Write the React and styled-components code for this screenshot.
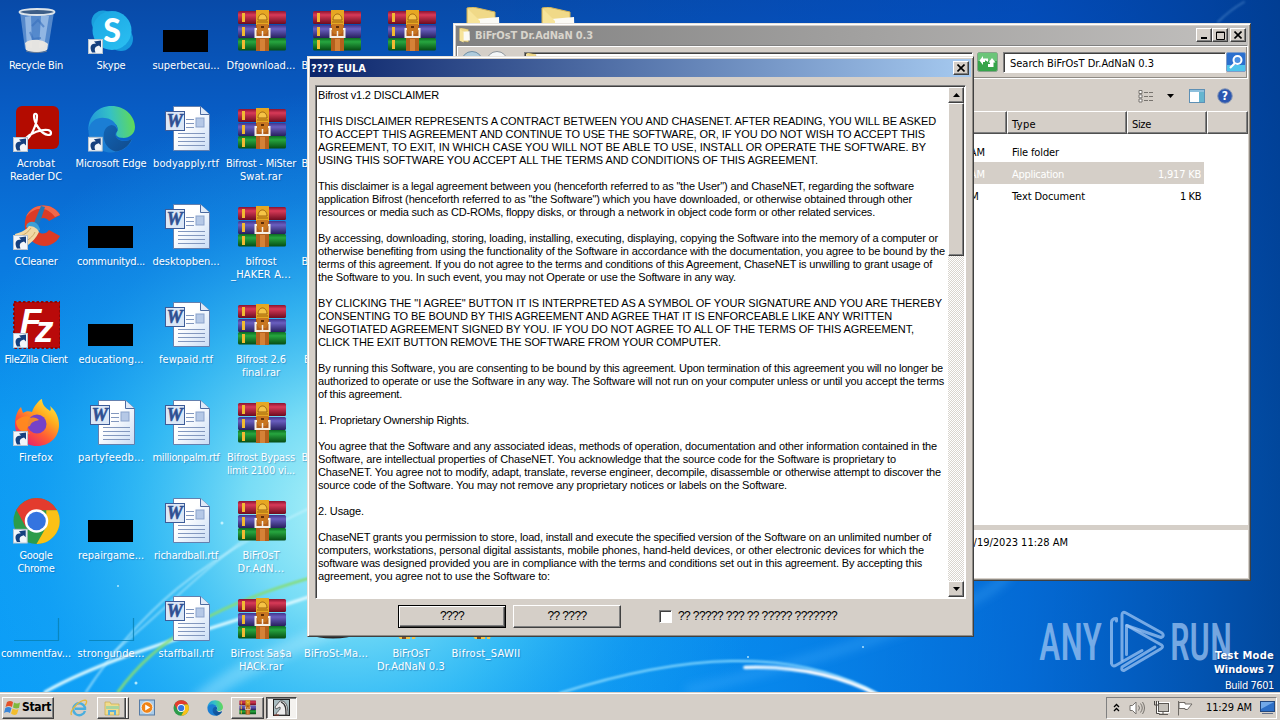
import { useLayoutEffect, useRef, useState } from "react";
import styled, { createGlobalStyle, css } from "styled-components";

const GlobalStyle = createGlobalStyle`
    html, body {
        margin: 0;
        padding: 0;
        overflow: hidden;
    }
    * {
        box-sizing: border-box;
    }
    svg {
        display: block;
        flex: none;
    }
`;

const face = "#d5cfc8";

const tahoma = css`
    font-family: "DejaVu Sans Condensed", "DejaVu Sans", sans-serif;
    font-stretch: condensed;
    font-size: 11px;
    line-height: 13px;
`;

const raised = css`
    background-color: ${face};
    border: 1px solid;
    border-color: #fff #404040 #404040 #fff;
    box-shadow: inset -1px -1px 0 #808080;
`;

const sunken = css`
    border: 1px solid;
    border-color: #808080 #fff #fff #808080;
    box-shadow: inset 1px 1px 0 #404040;
`;

/* text */

const FitText = styled.span`
    display: inline-block;
    white-space: pre;
`;

// spreads the letters so that a line takes the width of the bitmap font
const Fit = ({ text, width }) => {
    const ref = useRef(null);
    const [spacing, setSpacing] = useState(0);
    useLayoutEffect(() => {
        const natural = ref.current.getBoundingClientRect().width;
        setSpacing((width - natural) / text.length);
    }, [text, width]);
    return <FitText ref={ref} style={{ letterSpacing: `${spacing}px` }}>{text}</FitText>;
};

/* desktop */

const Desktop = styled.div`
    position: relative;
    width: 1280px;
    height: 720px;
    overflow: hidden;
    background: #0878dc;
    ${tahoma}
`;

const Wallpaper = styled.svg`
    position: absolute;
    top: 0;
    left: 0;
`;

const IconGrid = styled.div`
    position: relative;
    display: grid;
    grid-template-columns: repeat(8, 72px);
    grid-template-rows: repeat(7, 98px);
    grid-auto-flow: column;
    column-gap: 3px;
`;

const Shortcut = styled.div`
    display: flex;
    flex-direction: column;
    align-items: center;
    padding-top: 7px;
`;

const ShortcutLabel = styled.div`
    display: flex;
    flex-direction: column;
    align-items: center;
    padding-top: 4px;
    color: #fff;
    text-shadow: 1px 1px 1px rgba(0, 60, 130, 0.35);
`;

const Watermark = styled.svg`
    position: absolute;
    left: 1036px;
    top: 606px;
`;

const BuildInfo = styled.div`
    position: absolute;
    right: 6px;
    top: 649px;
    display: flex;
    flex-direction: column;
    align-items: flex-end;
    color: #fff;
    text-shadow: 1px 1px 1px rgba(0, 20, 80, 0.5);
    line-height: 14px;
`;

const BuildLine = styled.div`
    font-weight: ${props => props.$bold ? 700 : 400};
    margin-top: ${props => props.$bold ? 0 : 2}px;
`;

/* windows */

const Window = styled.div`
    position: absolute;
    display: flex;
    flex-direction: column;
    left: ${props => props.$x}px;
    top: ${props => props.$y}px;
    width: ${props => props.$w}px;
    height: ${props => props.$h}px;
    padding: 2px;
    background-color: ${face};
    border: 1px solid;
    border-color: #e8e4de #404040 #404040 #e8e4de;
    box-shadow: inset 1px 1px 0 #fff, inset -1px -1px 0 #908c86;
`;

const TitleBar = styled.div`
    display: flex;
    align-items: center;
    flex: none;
    height: ${props => props.$active ? 18 : 19}px;
    padding: 0 2px ${props => props.$active ? 0 : 1}px ${props => props.$active ? 1 : 2}px;
    color: ${props => props.$active ? "#fff" : "#d8d4cc"};
    font-weight: 700;
    background: ${props => props.$active
        ? "linear-gradient(90deg, #0a246a, #a6caf0)"
        : "linear-gradient(90deg, #808080, #c2c0be)"};
`;

const Title = styled.div`
    flex: 1;
    padding-left: ${props => props.$indent || 0}px;
`;

const CaptionButton = styled.button`
    ${raised}
    display: flex;
    align-items: center;
    justify-content: center;
    width: 16px;
    height: 14px;
    padding: 0;
    margin-left: ${props => props.$gap || 0}px;
`;

/* explorer */

const Rebar = styled.div`
    display: flex;
    align-items: center;
    justify-content: flex-end;
    flex: none;
    height: 34px;
    padding-right: 1px;
    border: 1px solid;
    border-color: #808080 #fff #fff #808080;
    box-shadow: inset 1px 1px 0 #fff, inset -1px -1px 0 #8e8a84;
`;

const NavButtons = styled.div`
    display: flex;
    gap: 3px;
    flex: none;
    padding-left: 4px;
`;

const AddressBox = styled.div`
    flex: 1;
    height: 21px;
    margin: 0 4px 0 16px;
    background: #fff;
    ${sunken}
`;

const SearchBox = styled.div`
    display: flex;
    align-items: center;
    width: 223px;
    height: 21px;
    margin-left: 5px;
    padding: 2px 0 0 6px;
    color: #000;
    background: #fff;
    ${sunken}
`;

const Toolbar = styled.div`
    display: flex;
    align-items: center;
    justify-content: flex-end;
    flex: none;
    height: 32px;
    padding: 2px 15px 0 0;
`;

const ToolIcon = styled.div`
    margin-left: ${props => props.$gap}px;
`;

const FileTable = styled.div`
    display: flex;
    flex-direction: column;
    flex: 1;
    background: #fff;
`;

const HeaderRow = styled.div`
    display: grid;
    grid-template-columns: 1fr 120px 80px 41px;
    flex: none;
    height: 23px;
    margin-bottom: 6px;
`;

const HeaderCell = styled.div`
    ${raised}
    border-color: #fff #505050 #505050 #fff;
    padding: 6px 0 0 4px;
`;

const FileRow = styled.div`
    display: grid;
    grid-template-columns: 1fr 136px 80px;
    align-items: center;
    flex: none;
    height: 22px;
    width: 748px;
    padding: 2px 3px 0 0;
    color: ${props => props.$selected ? "#fff" : "#000"};
    background: ${props => props.$selected ? "#d5cfc8" : "transparent"};
`;

const DateCell = styled.div`
    text-align: right;
    padding-right: ${props => props.$inset}px;
`;

const TypeCell = styled.div`
    padding-left: 27px;
`;

const SizeCell = styled.div`
    text-align: right;
`;

const Splitter = styled.div`
    flex: none;
    height: 5px;
    background: ${face};
`;

const DetailsPane = styled.div`
    flex: none;
    display: flex;
    justify-content: flex-end;
    height: 48px;
    padding: 6px 180px 0 0;
    background: #fff;
`;

/* agreement dialog */

const TextArea = styled.div`
    display: flex;
    flex: none;
    height: 514px;
    margin: 8px 5px 0 5px;
    padding: 1px;
    background: #fff;
    ${sunken}
`;

const TextLines = styled.div`
    flex: 1;
    padding: 2px 0 0 1px;
    overflow: hidden;
    color: #000;
    font-family: "Liberation Sans", Arial, sans-serif;
    font-size: 11px;
    line-height: 13px;
`;

const TextLine = styled.div`
    height: 13px;
    white-space: nowrap;
`;

const ScrollBar = styled.div`
    display: flex;
    flex-direction: column;
    justify-content: space-between;
    width: 16px;
    background: repeating-conic-gradient(#fff 0 25%, #d9d5ce 0 50%) 0 0 / 2px 2px;
`;

const ScrollButton = styled.button`
    ${raised}
    display: flex;
    align-items: center;
    justify-content: center;
    width: 16px;
    height: 16px;
    padding: 0;
`;

const ScrollThumb = styled.div`
    ${raised}
    height: 153px;
`;

const Footer = styled.div`
    display: flex;
    align-items: center;
    flex: 1;
    padding: 0 0 1px 88px;
    color: #000;
    font-family: "Liberation Sans", Arial, sans-serif;
    font-size: 12px;
`;

const PushButton = styled.button`
    ${raised}
    width: 108px;
    height: 23px;
    margin-right: 7px;
    padding: 0;
    color: #000;
    font: inherit;
    ${props => props.$default && css`
        border-color: #000;
        box-shadow: inset 1px 1px 0 #fff, inset -1px -1px 0 #404040, inset -2px -2px 0 #808080;
    `}
`;

const CheckBox = styled.div`
    width: 13px;
    height: 13px;
    margin: 0 6px 0 31px;
    background: #fff;
    ${sunken}
`;

/* taskbar */

const Taskbar = styled.div`
    position: absolute;
    left: 0;
    right: 0;
    bottom: 0;
    height: 28px;
    display: flex;
    align-items: center;
    padding: 3px 3px 1px 2px;
    background: ${face};
    border-top: 1px solid ${face};
    box-shadow: inset 0 1px 0 #fff;
`;

const StartButton = styled.button`
    ${raised}
    display: flex;
    align-items: center;
    width: 52px;
    height: 22px;
    padding: 0 0 0 1px;
    gap: 1px;
    color: #000;
    font: inherit;
    font-weight: 700;
    font-size: 12px;
`;

const QuickItem = styled.div`
    display: flex;
    align-items: center;
    justify-content: center;
    width: ${props => props.$w || 34}px;
    height: 22px;
    padding-left: ${props => props.$inset || 1}px;
`;

const TaskButton = styled.div`
    ${raised}
    display: flex;
    align-items: center;
    justify-content: center;
    width: ${props => props.$w || 32}px;
    height: 22px;
    margin-right: ${props => props.$gap || 0}px;
    ${props => props.$stack && css`
        padding-right: 3px;
        box-shadow: inset -1px 0 0 ${face}, inset -2px 0 0 #fff, inset -3px 0 0 #404040, inset -4px 0 0 #808080, inset 0 -1px 0 #808080;
    `}
    ${props => props.$pressed && css`
        background: #f4f2ef;
        border-color: #404040 #fff #fff #404040;
        box-shadow: inset 1px 1px 0 #808080;
    `}
`;

const Tray = styled.div`
    display: flex;
    align-items: center;
    width: 171px;
    height: 22px;
    margin-left: auto;
    padding-left: 6px;
    border: 1px solid;
    border-color: #808080 #fff #fff #808080;
    color: #000;
`;

const Clock = styled.div`
    margin: 0 8px 0 12px;
`;

/* drawings */

const ShortcutBadge = () => (
    <g>
        <rect x="1.5" y="32.5" width="14" height="14" fill="#f2f6fa" stroke="#b8c4d0" />
        <path d="M5 45.500c-3-6-1-9 4-9L7 34.500l7-1v7l-2-2c-4 1-5 3-3.500 7z" fill="#15407e" />
    </g>
);

const RecycleBin = () => (
    <svg width="48" height="48" viewBox="0 0 48 48">
        <path d="M8 5l5 37c4 4 18 4 23 0l6-37z" fill="#7fa9dc" fillOpacity=".65" />
        <path d="M13 10l2 30 5 1-1-32zM29 9l-2 32 5-1 5-31z" fill="#c3dbf5" fillOpacity=".55" />
        <path d="M13 36c5-5 18-4 23 1l-1 6c-5 3-16 3-21 0z" fill="#ede9e2" fillOpacity=".95" />
        <path d="M20 19l6-6 6 7M18 25l3 7 8-1" fill="none" stroke="#386fbc" strokeWidth="2" opacity=".6" />
        <ellipse cx="25" cy="5" rx="17.5" ry="3" fill="#3d5e87" stroke="#dce4ea" strokeWidth="1.8" />
        <path d="M14 44c6 2 16 2 21 0" fill="none" stroke="#6b7c93" />
    </svg>
);

const Skype = () => (
    <svg width="48" height="48" viewBox="0 0 48 48">
        <defs>
            <linearGradient id="sky" x1="0" y1="0" x2=".7" y2="1">
                <stop offset="0" stopColor="#1aa5e2" />
                <stop offset="1" stopColor="#29bdf0" />
            </linearGradient>
        </defs>
        <circle cx="16" cy="15" r="11.5" fill="#1a9fdc" />
        <circle cx="34" cy="32" r="12" fill="#169ade" />
        <circle cx="25" cy="23.500" r="19.500" fill="url(#sky)" />
        <text x="25" y="34.500" textAnchor="middle" fontFamily="Lato, sans-serif" fontWeight="900" fontSize="32" fill="#fff">S</text>
        <ShortcutBadge />
    </svg>
);

const Acrobat = () => (
    <svg width="48" height="48" viewBox="0 0 48 48">
        <rect x="4" y="1" width="43" height="43" rx="6" fill="#b30b00" />
        <path d="M13 36C19 32 25 20 25 11C25 8 22 8 22 11C22 18 29 29 36 30C40 30 40 26 36 25C29 24 19 28 14 33C12 36 12 37 13 36Z" fill="none" stroke="#fff" strokeWidth="2.200" />
        <ShortcutBadge />
    </svg>
);

const EdgeArt = () => (
    <g>
        <defs>
            <linearGradient id="edgeTop" x1="0" y1=".6" x2="1" y2=".5">
                <stop offset="0" stopColor="#2096dc" />
                <stop offset=".5" stopColor="#35c1c5" />
                <stop offset="1" stopColor="#62da55" />
            </linearGradient>
            <linearGradient id="edgeLow" x1="0" y1="0" x2="1" y2="1">
                <stop offset="0" stopColor="#1264b4" />
                <stop offset="1" stopColor="#114a8b" />
            </linearGradient>
        </defs>
        <path d="M1.500 25C1 11 11 .5 25 .5S49 11 49 22c0 8-7 12-14 11-6-1-6-4-4-7 1-2 0-5-2-7z" fill="url(#edgeTop)" />
        <path d="M1.500 25C3 14 13 11 20 13c6 1 11 6 11 12-1 1-2 2-2 4 1 7 11 9 17 5 0 4-8 14-21 14C10 48 1 36 1.500 25z" fill="#1b7ed4" />
        <path d="M17 31c0-6 3-10 8-11 3 0 6 3 6 6-1 1-2 2-2 4 2 7 11 8 17 4-3 8-11 13-17 13-7-2-12-8-12-16z" fill="url(#edgeLow)" />
    </g>
);

const Edge = () => (
    <svg width="48" height="48" viewBox="0 0 49 48">
        <EdgeArt />
        <ShortcutBadge />
    </svg>
);

const CCleaner = () => (
    <svg width="48" height="48" viewBox="0 0 48 48">
        <path d="M48 12C41-1 20-1 14 14c-6 18 10 33 24 28 5-2 8-5 10-9l-11-6c-4 6-12 4-13-3-1-9 9-12 13-6z" fill="#dc3b25" />
        <path d="M48 12C41-1 20-1 14 14c8-10 20-12 29 0z" fill="#f1684a" />
        <path d="M29 3l4 1-6 18-5-2z" fill="#2277b6" />
        <path d="M15 21c5-5 12-1 13 6l-4 2-10-5z" fill="#3da0d6" />
        <path d="M3 31c7-2 11-4 14-8 5 0 9 3 10 6-3 6-7 10-11 13-8-1-13-5-13-11z" fill="#f1d8a4" />
        <path d="M8 33c5-1 9-5 11-8M14 38c4-2 8-6 9-9" stroke="#cba764" fill="none" />
        <ShortcutBadge />
    </svg>
);

const FileZilla = () => (
    <svg width="48" height="48" viewBox="0 0 48 48">
        <rect x="2" y="1" width="46" height="46" fill="#b90a0a" stroke="#8e0707" strokeWidth="2" strokeDasharray="2.500 2" />
        <text x="8" y="32" fontFamily="Liberation Sans, sans-serif" fontStyle="italic" fontWeight="700" fontSize="35" fill="#fff">F</text>
        <text x="23" y="41" fontFamily="Liberation Sans, sans-serif" fontStyle="italic" fontWeight="700" fontSize="37" fill="#fff">z</text>
        <ShortcutBadge />
    </svg>
);

const Firefox = () => (
    <svg width="48" height="48" viewBox="0 0 48 48">
        <defs>
            <linearGradient id="fox" x1=".9" y1="0" x2=".2" y2="1">
                <stop offset="0" stopColor="#fff04a" />
                <stop offset=".35" stopColor="#ffad1e" />
                <stop offset=".65" stopColor="#ff5a36" />
                <stop offset="1" stopColor="#e31a72" />
            </linearGradient>
        </defs>
        <path d="M3 25C3 18 5 12 9 8l2 6c3-2 6-2 9-1C22 7 27 1 30 0c0 6 4 9 8 12 1-1 1-3 0-5 6 5 9 12 9 19 0 12-9 21-22 21S3 37 3 25z" fill="url(#fox)" />
        <circle cx="25" cy="25" r="9.500" fill="#7542c8" />
        <path d="M4 22c5-5 12-6 15-3 3-1 6 0 8 2-4 1-8 2-9 6-3 0-4 4 0 8C9 34 4 29 4 22z" fill="#ff8d1d" fillOpacity=".9" />
        <ShortcutBadge />
    </svg>
);

const ChromeArt = () => (
    <g>
        <circle cx="25" cy="24" r="23.500" fill="#2c9c4b" />
        <path d="M25 .5A23.500 23.500 0 0 1 46 13H25L14 30 4.500 12.500A23.500 23.500 0 0 1 25 .5z" fill="#e33b2e" />
        <path d="M46 13a23.500 23.500 0 0 1-21 34.500L35 30V13z" fill="#fbc116" />
        <circle cx="25" cy="24" r="12" fill="#fff" />
        <circle cx="25" cy="24" r="9.500" fill="#3474e0" />
    </g>
);

const Chrome = () => (
    <svg width="48" height="48" viewBox="0 0 49 48">
        <ChromeArt />
        <ShortcutBadge />
    </svg>
);

const Thumbnail = ({ empty }) => (
    <svg width="48" height="48" viewBox="0 0 48 48">
        {empty
            ? <path d="M2 45.500h44.500V23" fill="none" stroke="#087fb2" strokeWidth="1.200" opacity=".8" />
            : <rect x="1" y="23" width="45" height="22" />}
    </svg>
);

const WordDoc = () => (
    <svg width="48" height="48" viewBox="0 0 48 48">
        <defs>
            <linearGradient id="page" x1="0" y1="0" x2="1" y2="1">
                <stop offset=".4" stopColor="#fff" />
                <stop offset="1" stopColor="#c9dcf5" />
            </linearGradient>
        </defs>
        <path d="M11.500 1.500h27l9 8v36h-36z" fill="url(#page)" stroke="#6480ae" />
        <path d="M38.500 1.500v8h9" fill="#dfe9f7" stroke="#4d6a9f" />
        <path d="M24 14.500h8M24 18.500h8M24 22.500h8M16 28.500h27M16 32.500h27M16 36.500h27M16 40.500h27" stroke="#8297be" />
        <rect x="34" y="13" width="8" height="9" fill="#b5c8e6" stroke="#8ba3cc" />
        <rect x="3.500" y="6.500" width="19" height="19" fill="#dce7f6" stroke="#3d5c98" />
        <text x="12.800" y="22" textAnchor="middle" fontFamily="Liberation Serif, serif" fontStyle="italic" fontWeight="700" fontSize="18" fill="#2f5092" stroke="#2f5092" strokeWidth=".6">W</text>
    </svg>
);

const RarArt = () => (
    <g>
        <defs>
            <linearGradient id="bookRed" x1="0" y1="0" x2="0" y2="1">
                <stop offset="0" stopColor="#8b1330" />
                <stop offset=".3" stopColor="#d83a58" />
                <stop offset="1" stopColor="#6d0c20" />
            </linearGradient>
            <linearGradient id="bookBlue" x1="0" y1="0" x2="0" y2="1">
                <stop offset="0" stopColor="#40348c" />
                <stop offset=".3" stopColor="#6a5fc0" />
                <stop offset="1" stopColor="#28205e" />
            </linearGradient>
            <linearGradient id="bookGreen" x1="0" y1="0" x2="0" y2="1">
                <stop offset="0" stopColor="#0c6b22" />
                <stop offset=".3" stopColor="#27a63f" />
                <stop offset="1" stopColor="#064c14" />
            </linearGradient>
        </defs>
        <rect x="1" y="4" width="48" height="13" rx="1.500" fill="url(#bookRed)" />
        <rect x="1" y="18" width="48" height="13" rx="1.500" fill="url(#bookBlue)" />
        <rect x="1" y="31" width="48" height="12.500" rx="1.500" fill="url(#bookGreen)" />
        <path d="M5 6h3v9H5zM5 20h3v9H5zM5 33h3v9H5z" fill="#f2ba32" />
        <rect x="19" y="3" width="13" height="41" fill="#b4601c" />
        <rect x="19" y="3" width="13" height="15" fill="#e6a722" />
        <path d="M21 13c0-8 9-8 9 0zM20 15h11" fill="#f6c446" stroke="#9e6510" />
        <path d="M20 17h11v7l-2 3h-7l-2-3z" fill="#c87620" />
        <path d="M24 19h3v2h-3z" fill="#5d2c08" />
        <path d="M20 22h-1.500v8h14v-8H31" fill="none" stroke="#f4efe6" strokeWidth="2" />
        <path d="M25.500 24v5" stroke="#f4efe6" strokeWidth="1.500" />
        <rect x="23" y="32" width="5" height="12" fill="#d58237" />
    </g>
);

const WinRar = () => (
    <svg width="48" height="48" viewBox="0 0 48 48" overflow="visible">
        <RarArt />
    </svg>
);

const Installer = () => (
    <svg width="48" height="48" viewBox="0 0 48 48">
        <path d="M8 8h32v32H8z" fill="#c8a03c" />
        <path d="M10 40h6l3 4h-6zM19 40h4v4h-4zM25 40h4l-1 4h-3z" fill="#f0c34a" />
        <path d="M15 41h4v3h-4z" fill="#7c4c28" />
    </svg>
);

const DarkDisc = () => (
    <svg width="48" height="48" viewBox="0 0 48 48">
        <ellipse cx="21" cy="40" rx="19" ry="3.500" fill="#2b2624" />
    </svg>
);

const Folder = ({ size = 48 }) => (
    <svg width={size} height={size} viewBox="0 0 48 48">
        <path d="M5 1l6-1 22 5v40L5 40z" fill="#f0d988" stroke="#d2b258" />
        <path d="M14 12l23-2 1 30H14z" fill="#fbfaf5" />
        <path d="M6 2l12 12v32L6 41z" fill="#f7e49a" />
    </svg>
);

const FlagArt = () => (
    <svg width="17" height="17" viewBox="0 0 17 17">
        <path d="M3 3q3-2 6 0L8 8Q5 6 1.500 8z" fill="#e4522a" />
        <path d="M10 3.500q3 2 6 0L15 9q-3 1-6-.5z" fill="#7fb93c" />
        <path d="M1.300 9q3-2 6.200 0L6 14q-3-2-6 0z" fill="#3a86d8" />
        <path d="M8.600 9.500q3 2 6 .5L13 15q-3 2-6-.5z" fill="#f3bd2c" />
    </svg>
);

const IEIcon = () => (
    <svg width="18" height="18" viewBox="0 0 18 18">
        <path d="M15 12A6 6 0 1 1 15 8.500v1.200H5" fill="none" stroke="#4aaede" strokeWidth="2.400" />
        <path d="M1.500 16C-1 12 9 1.500 15 1.200c3 .2 1 4 0 5" fill="none" stroke="#e7b83a" strokeWidth="1.300" />
    </svg>
);

const ExplorerIcon = () => (
    <svg width="18" height="18" viewBox="0 0 18 18">
        <path d="M2 3h5l1 2h8v11H2z" fill="#f0dc8c" stroke="#c9a94b" strokeWidth=".7" />
        <path d="M3 7h13v3H3z" fill="#a9d4a0" />
        <path d="M5 16v-5h8v5h-2v-3H7v3z" fill="#5fb2d8" />
    </svg>
);

const PlayerIcon = () => (
    <svg width="16" height="17" viewBox="0 0 16 17">
        <rect x=".5" y="1" width="15" height="15" fill="#a9cbe8" stroke="#567ca6" />
        <circle cx="8" cy="8.500" r="5.800" fill="#f08417" stroke="#fff" strokeWidth=".8" />
        <path d="M6.200 5.500v6l5-3z" fill="#fff" />
    </svg>
);

const HorseIcon = () => (
    <svg width="17" height="17" viewBox="0 0 17 17">
        <rect x=".5" y=".5" width="16" height="16" fill="#a8bcc0" stroke="#222" />
        <path d="M3 16c1-5 5-4 4-8L3 10 2 8l5-6c6-1 8 5 8 14z" fill="#ececec" stroke="#444" strokeWidth=".8" />
        <path d="M8 3c5 2 5 7 5 13" stroke="#333" strokeWidth="1.300" fill="none" />
        <path d="M1 16h5" stroke="#8b3a2c" />
    </svg>
);

const SpeakerIcon = () => (
    <svg width="16" height="16" viewBox="0 0 16 16" fill="none" stroke="#77736e">
        <path d="M1 5.500h2.500L7 2v12l-3.500-3.500H1z" fill="#fff" />
        <path d="M9.500 5.500q2 2.500 0 5M11.500 3.500q3.500 4.500 0 9M13.500 2q4 6 0 12" />
    </svg>
);

const NetworkIcon = () => (
    <svg width="17" height="16" viewBox="0 0 17 16" fill="none" stroke="#5b5854">
        <rect x="5.500" y="3.500" width="10" height="8" fill="#c4c1bb" stroke="#fff" strokeWidth="3" />
        <rect x="5.500" y="3.500" width="10" height="8" fill="#c4c1bb" />
        <path d="M10 12v2.500M6 14.500h9" />
        <path d="M1.500 1v4h4V1M3.500 1v12.500h3" stroke="#4a4744" />
    </svg>
);

const FlagIcon = () => (
    <svg width="17" height="16" viewBox="0 0 17 16" fill="#fff" stroke="#6f6b66">
        <path d="M1.500 1v14.500M2 2.500h6v1.500h7L12.500 7l-2 2.500H8V8.500H2z" />
    </svg>
);

const MonitorIcon = () => (
    <svg width="15" height="13" viewBox="0 0 15 13">
        <rect x=".5" y=".5" width="14" height="10" fill="#2d6fc6" stroke="#23487e" />
        <path d="M1 1h13L1 8z" fill="#72a9e8" />
        <path d="M2 12.500h11" stroke="#64718a" />
    </svg>
);

const RefreshIcon = () => (
    <svg width="21" height="20" viewBox="0 0 21 20">
        <rect x=".5" y=".5" width="20" height="19" rx="2" fill="#36a44a" stroke="#87a28a" />
        <path d="M1 1h19v8H1z" fill="#6bc579" />
        <path d="M6 4L2.500 8.500 6 13v-3h2v-2l3 2V6.500H6zM15 6l3.500 4.500H16.500V15H11v-3h2v-1.500h-1.500z" fill="#fff" />
    </svg>
);

const SearchIcon = () => (
    <svg width="20" height="20" viewBox="0 0 20 20">
        <rect x=".5" y=".5" width="19" height="19" rx="1.500" fill="#2a6fce" stroke="#7d9cc8" />
        <path d="M1 13h18v6H1z" fill="#4ec4ec" />
        <circle cx="11.500" cy="8" r="4" fill="#4a8fe0" stroke="#fff" strokeWidth="2" />
        <path d="M9 11l-5 5" stroke="#fff" strokeWidth="2.200" />
    </svg>
);

const ViewIcon = () => (
    <svg width="16" height="13" viewBox="0 0 16 13" fill="none" stroke="#77736e">
        <path d="M1 .5h3v3H1zM1 4.800h3v3H1zM1 9h3v3H1z" fill="#fff" />
        <path d="M6 2.500h9M6 6.500h9M6 10.500h9" strokeDasharray="4 1" />
    </svg>
);

const PreviewIcon = () => (
    <svg width="16" height="14" viewBox="0 0 16 14">
        <rect x=".5" y=".5" width="15" height="13" fill="#fff" stroke="#5d90b5" />
        <path d="M1 1h14v2H1z" fill="#8fc0dc" />
        <path d="M10 3h5v10h-5z" fill="#65b5cf" />
    </svg>
);

const HelpIcon = () => (
    <svg width="16" height="16" viewBox="0 0 16 16">
        <circle cx="8" cy="8" r="7.300" fill="#2c57b0" stroke="#8d9bb5" />
        <text x="8" y="12.300" textAnchor="middle" fontFamily="DejaVu Sans" fontWeight="700" fontSize="12" fill="#fff">?</text>
    </svg>
);

const Arrow = ({ up }) => (
    <svg width="7" height="4" viewBox="0 0 7 4">
        <path d={up ? "M3.500 0L7 4H0z" : "M0 0h7L3.500 4z"} />
    </svg>
);

const CloseGlyph = () => (
    <svg width="8" height="8" viewBox="0 0 8 8">
        <path d="M.5 .5l7 7M7.500 .5l-7 7" stroke="#000" strokeWidth="1.600" />
    </svg>
);

const WallpaperArt = () => (
    <Wallpaper width="1280" height="720" viewBox="0 0 1280 720">
        <defs>
            <linearGradient id="base" x1="0" y1="0" x2="0" y2="1">
                <stop offset="0" stopColor="#084aa8" />
                <stop offset=".15" stopColor="#085cc4" />
                <stop offset=".35" stopColor="#0a78de" />
                <stop offset=".6" stopColor="#0a98f2" />
                <stop offset="1" stopColor="#0a9ffa" />
            </linearGradient>
            <linearGradient id="dusk" x1="0" y1="0" x2="1" y2="0">
                <stop offset=".35" stopColor="#0058cc" stopOpacity="0" />
                <stop offset=".6" stopColor="#0050cc" stopOpacity=".3" />
                <stop offset=".8" stopColor="#004cc0" stopOpacity=".62" />
                <stop offset="1" stopColor="#003c90" stopOpacity=".88" />
            </linearGradient>
            <radialGradient id="glow" gradientUnits="userSpaceOnUse" cx="350" cy="510" r="420">
                <stop offset="0" stopColor="#b4f4f8" />
                <stop offset=".25" stopColor="#84e4f6" stopOpacity=".9" />
                <stop offset=".5" stopColor="#45c8f4" stopOpacity=".65" />
                <stop offset=".75" stopColor="#22a8f0" stopOpacity=".3" />
                <stop offset="1" stopColor="#1aa2f0" stopOpacity="0" />
            </radialGradient>
            <filter id="soft"><feGaussianBlur stdDeviation="1" /></filter>
            <filter id="softer"><feGaussianBlur stdDeviation="5" /></filter>
        </defs>
        <rect width="1280" height="720" fill="url(#base)" />
        <rect width="1280" height="720" fill="url(#dusk)" />
        <rect width="1280" height="720" fill="url(#glow)" />
        <g fill="none" strokeLinecap="round">
            <path d="M200 700Q260 650 420 600" stroke="#c8f4ff" strokeWidth="16" opacity=".35" filter="url(#softer)" />
            <path d="M45 692C110 655 210 630 330 590" stroke="#d8f8ff" strokeWidth="3" filter="url(#soft)" />
            <path d="M86 692C140 610 200 560 310 508" stroke="#c8f4ff" strokeWidth="1.600" opacity=".8" filter="url(#soft)" />
            <path d="M110 655C160 615 190 580 250 535" stroke="#c8f4ff" strokeWidth="1.500" opacity=".7" filter="url(#soft)" />
            <path d="M118 692C155 640 215 605 310 578" stroke="#85dd78" strokeWidth="2.600" filter="url(#soft)" />
            <path d="M560 693C680 655 790 645 880 695" stroke="#8cdcff" strokeWidth="2" filter="url(#soft)" />
            <path d="M745 667.500Q820 665 878 695" stroke="#fff" strokeWidth="3.600" filter="url(#soft)" />
            <path d="M690 690Q800 665 900 630T1010 570" stroke="#4fb4ff" strokeWidth="10" opacity=".3" filter="url(#softer)" />
            <path d="M1218 22q12-12 26-20" stroke="#5d94d0" strokeWidth="2" opacity=".5" filter="url(#soft)" />
        </g>
        <g fill="#d8f8ff" opacity=".8">
            <circle cx="222" cy="523" r="1.500" />
            <circle cx="136" cy="683" r="1.500" />
            <circle cx="118" cy="586" r="1" />
            <circle cx="748" cy="657" r="1" />
            <circle cx="863" cy="647" r="1" />
        </g>
    </Wallpaper>
);

const WatermarkArt = () => (
    <Watermark width="200" height="76" viewBox="0 0 200 76">
        <g fill="#a2c8f4" fillOpacity=".72" fontFamily="Roboto, sans-serif" fontSize="52" fontWeight="500">
            <text x="3" y="53.500" textLength="63" lengthAdjust="spacingAndGlyphs">ANY</text>
            <text x="134" y="53.500" textLength="62" lengthAdjust="spacingAndGlyphs">RUN</text>
        </g>
        <g fill="none" stroke="#a2c8f4" strokeOpacity=".72" strokeWidth="3" strokeLinejoin="round" strokeLinecap="round">
            <path d="M80.500 15v-2.500q-5 0-5 4v41q1 4 5 1.500L106 44.500" />
            <path d="M86 54V9q0-4 4-2l36 20q3 3-1 4.500L90.500 19.500v29" />
            <path d="M91 19.500L125.500 39q2.500 2-1 4L88 64.500q-3 .5-2-3.500l33-20" />
        </g>
    </Watermark>
);

/* data */

const rar = (...lines) => ({ icon: WinRar, lines });
const doc = (...lines) => ({ icon: WordDoc, lines });
const black = (...lines) => ({ icon: Thumbnail, lines });

const shortcuts = [
    { icon: RecycleBin, lines: [["Recycle Bin", 54]] },
    { icon: Acrobat, lines: [["Acrobat", 38], ["Reader DC", 52]] },
    { icon: CCleaner, lines: [["CCleaner", 43]] },
    { icon: FileZilla, lines: [["FileZilla Client", 63]] },
    { icon: Firefox, lines: [["Firefox", 34]] },
    { icon: Chrome, lines: [["Google", 33], ["Chrome", 37]] },
    { icon: Thumbnail, empty: true, lines: [["commentfav...", 70]] },

    { icon: Skype, lines: [["Skype", 29]] },
    { icon: Edge, lines: [["Microsoft Edge", 71]] },
    black(["communityd...", 68]),
    black(["educationg...", 65]),
    doc(["partyfeedb...", 66]),
    black(["repairgame...", 66]),
    { icon: Thumbnail, empty: true, lines: [["strongunde...", 67]] },

    black(["superbecau...", 67]),
    doc(["bodyapply.rtf", 66]),
    doc(["desktopben...", 67]),
    doc(["fewpaid.rtf", 54]),
    doc(["millionpalm.rtf", 67]),
    doc(["richardball.rtf", 64]),
    doc(["staffball.rtf", 55]),

    rar(["Dfgownload...", 69]),
    rar(["Bifrost - MiSter", 70], ["Swat.rar", 42]),
    rar(["bifrost", 31], ["_HAKER A...", 60]),
    rar(["Bifrost 2.6", 50], ["final.rar", 38]),
    rar(["Bifrost Bypass", 68], ["limit 2100 vi...", 68]),
    rar(["BiFrOsT", 37], ["Dr.AdN...", 47]),
    rar(["BiFrost Sa$a", 61], ["HACk.rar", 44]),

    rar(["Bifrost 1.2...", 69]),
    rar(["Bifrost 1.2...", 69]),
    rar(["Bifrost 1.2...", 69]),
    rar(["Bifrost...", 64]),
    rar(["Bifrost 1.2...", 69]),
    rar(),
    { icon: DarkDisc, lines: [["BiFroSt-Ma...", 64]] },

    // the next two columns lie mostly under the open windows
    rar(), rar(), rar(), rar(), rar(), rar(),
    { icon: Installer, lines: [["BiFrOsT", 37], ["Dr.AdNaN 0.3", 68]] },

    { icon: Folder, lines: [] },
    rar(), rar(), rar(), rar(), rar(),
    { icon: Installer, lines: [["Bifrost_SAWII", 69]] },

    { icon: Folder, lines: [] },
];

const agreement = [
    ["Bifrost v1.2 DISCLAIMER", 121],
    null,
    ["THIS DISCLAIMER REPRESENTS A CONTRACT BETWEEN YOU AND CHASENET. AFTER READING, YOU WILL BE ASKED", 618],
    ["TO ACCEPT THIS AGREEMENT AND CONTINUE TO USE THE SOFTWARE, OR, IF YOU DO NOT WISH TO ACCEPT THIS", 607],
    ["AGREEMENT, TO EXIT, IN WHICH CASE YOU WILL NOT BE ABLE TO USE, INSTALL OR OPERATE THE SOFTWARE. BY", 608],
    ["USING THIS SOFTWARE YOU ACCEPT ALL THE TERMS AND CONDITIONS OF THIS AGREEMENT.", 500],
    null,
    ["This disclaimer is a legal agreement between you (henceforth referred to as \"the User\") and ChaseNET, regarding the software", 596],
    ["application Bifrost (henceforth referred to as \"the Software\") which you have downloaded, or otherwise obtained through other", 594],
    ["resources or media such as CD-ROMs, floppy disks, or through a network in object code form or other related services.", 557],
    null,
    ["By accessing, downloading, storing, loading, installing, executing, displaying, copying the Software into the memory of a computer or", 620],
    ["otherwise benefiting from using the functionality of the Software in accordance with the documentation, you agree to be bound by the", 627],
    ["terms of this agreement. If you do not agree to the terms and conditions of this Agreement, ChaseNET is unwilling to grant usage of", 614],
    ["the Software to you. In such event, you may not Operate or use the Software in any way.", 418],
    null,
    ["BY CLICKING THE \"I AGREE\" BUTTON IT IS INTERPRETED AS A SYMBOL OF YOUR SIGNATURE AND YOU ARE THEREBY", 624],
    ["CONSENTING TO BE BOUND BY THIS AGREEMENT AND AGREE THAT IT IS ENFORCEABLE LIKE ANY WRITTEN", 574],
    ["NEGOTIATED AGREEMENT SIGNED BY YOU. IF YOU DO NOT AGREE TO ALL OF THE TERMS OF THIS AGREEMENT,", 596],
    ["CLICK THE EXIT BUTTON REMOVE THE SOFTWARE FROM YOUR COMPUTER.", 403],
    null,
    ["By running this Software, you are consenting to be bound by this agreement. Upon termination of this agreement you will no longer be", 625],
    ["authorized to operate or use the Software in any way. The Software will not run on your computer unless or until you accept the terms", 626],
    ["of this agreement.", 84],
    null,
    ["1. Proprietary Ownership Rights.", 151],
    null,
    ["You agree that the Software and any associated ideas, methods of operation, documentation and other information contained in the", 619],
    ["Software, are intellectual properties of ChaseNET. You acknowledge that the source code for the Software is proprietary to", 578],
    ["ChaseNET. You agree not to modify, adapt, translate, reverse engineer, decompile, disassemble or otherwise attempt to discover the", 623],
    ["source code of the Software. You may not remove any proprietary notices or labels on the Software.", 469],
    null,
    ["2. Usage.", 46],
    null,
    ["ChaseNET grants you permission to store, load, install and execute the specified version of the Software on an unlimited number of", 613],
    ["computers, workstations, personal digital assistants, mobile phones, hand-held devices, or other electronic devices for which the", 606],
    ["software was designed provided you are in compliance with the terms and conditions set out in this agreement. By accepting this", 604],
    ["agreement, you agree not to use the Software to:", 232],
];

const files = [
    { date: "10/19/2023 11:28 AM", inset: 0, type: "File folder", typeWidth: 47, size: "" },
    { date: "10/19/2023 11:28 AM", inset: 0, type: "Application", typeWidth: 52, size: "1,917 KB", sizeWidth: 43, selected: true },
    { date: "10/19/2023 9:28 AM", inset: 6, type: "Text Document", typeWidth: 73, size: "1 KB", sizeWidth: 21 },
];

const Explorer = () => (
    <Window $x={453} $y={23} $w={798} $h={558}>
        <TitleBar>
            <Folder size={15} />
            <Title $indent={2}><Fit text="BiFrOsT Dr.AdNaN 0.3" width={118} /></Title>
            <CaptionButton>
                <svg width="8" height="8"><path d="M1 6h6v2H1z" /></svg>
            </CaptionButton>
            <CaptionButton>
                <svg width="9" height="9"><path d="M.5 1h8v7.500h-8zM0 1.500h9" fill="none" stroke="#000" /></svg>
            </CaptionButton>
            <CaptionButton $gap={2}><CloseGlyph /></CaptionButton>
        </TitleBar>
        <Rebar>
            <NavButtons>
                <svg width="22" height="24"><circle cx="11" cy="12" r="10.500" fill="#aecbdc" stroke="#6f8ea6" /></svg>
                <svg width="22" height="24"><circle cx="11" cy="12" r="10.500" fill="#f4f6f7" stroke="#8d959c" /></svg>
            </NavButtons>
            <AddressBox><Folder size={16} /></AddressBox>
            <RefreshIcon />
            <SearchBox><Fit text="Search BiFrOsT Dr.AdNaN 0.3" width={144} /></SearchBox>
            <SearchIcon />
        </Rebar>
        <Toolbar>
            <ToolIcon><ViewIcon /></ToolIcon>
            <ToolIcon $gap={13}><Arrow /></ToolIcon>
            <ToolIcon $gap={15}><PreviewIcon /></ToolIcon>
            <ToolIcon $gap={12}><HelpIcon /></ToolIcon>
        </Toolbar>
        <FileTable>
            <HeaderRow>
                <HeaderCell />
                <HeaderCell><Fit text="Type" width={24} /></HeaderCell>
                <HeaderCell><Fit text="Size" width={19} /></HeaderCell>
                <HeaderCell />
            </HeaderRow>
            {files.map((file, i) => (
                <FileRow key={i} $selected={file.selected}>
                    <DateCell $inset={file.inset}><Fit text={file.date} width={106} /></DateCell>
                    <TypeCell><Fit text={file.type} width={file.typeWidth} /></TypeCell>
                    <SizeCell>{file.size && <Fit text={file.size} width={file.sizeWidth} />}</SizeCell>
                </FileRow>
            ))}
        </FileTable>
        <Splitter />
        <DetailsPane><Fit text="10/19/2023 11:28 AM" width={107} /></DetailsPane>
    </Window>
);

const Eula = () => (
    <Window $x={307} $y={56} $w={667} $h={581}>
        <TitleBar $active>
            <Title><Fit text="???? EULA" width={55} /></Title>
            <CaptionButton><CloseGlyph /></CaptionButton>
        </TitleBar>
        <TextArea>
            <TextLines>
                {agreement.map((line, i) => (
                    <TextLine key={i}>{line && <Fit text={line[0]} width={line[1]} />}</TextLine>
                ))}
            </TextLines>
            <ScrollBar>
                <div>
                    <ScrollButton><Arrow up /></ScrollButton>
                    <ScrollThumb />
                </div>
                <ScrollButton><Arrow /></ScrollButton>
            </ScrollBar>
        </TextArea>
        <Footer>
            <PushButton $default><Fit text="????" width={24} /></PushButton>
            <PushButton><Fit text="?? ????" width={39} /></PushButton>
            <CheckBox />
            <Fit text="?? ????? ??? ?? ????? ???????" width={159} />
        </Footer>
    </Window>
);

export default function App() {
    return (
        <>
            <GlobalStyle />
            <Desktop>
                <WallpaperArt />
                <IconGrid>
                    {shortcuts.map(({ icon: Icon, lines, empty }, i) => (
                        <Shortcut key={i}>
                            <Icon empty={empty} />
                            <ShortcutLabel>
                                {lines.map(([text, width]) => <Fit key={text} text={text} width={width} />)}
                            </ShortcutLabel>
                        </Shortcut>
                    ))}
                </IconGrid>
                <WatermarkArt />
                <BuildInfo>
                    <BuildLine $bold><Fit text="Test Mode" width={59} /></BuildLine>
                    <BuildLine $bold><Fit text="Windows 7" width={60} /></BuildLine>
                    <BuildLine><Fit text="Build 7601" width={49} /></BuildLine>
                </BuildInfo>
                <Explorer />
                <Eula />
                <Taskbar>
                    <StartButton>
                        <FlagArt />
                        <Fit text="Start" width={29} />
                    </StartButton>
                    <QuickItem $w={43} $inset={7}><IEIcon /></QuickItem>
                    <TaskButton $w={32} $stack><ExplorerIcon /></TaskButton>
                    <QuickItem><PlayerIcon /></QuickItem>
                    <QuickItem>
                        <svg width="16" height="16" viewBox="0 0 49 48"><ChromeArt /></svg>
                    </QuickItem>
                    <QuickItem>
                        <svg width="16" height="16" viewBox="0 0 49 48"><EdgeArt /></svg>
                    </QuickItem>
                    <TaskButton $w={33} $gap={2}>
                        <svg width="17" height="17" viewBox="0 0 49 48"><RarArt /></svg>
                    </TaskButton>
                    <TaskButton $w={31} $pressed><HorseIcon /></TaskButton>
                    <Tray>
                        <svg width="7" height="9" fill="none" stroke="#000" strokeWidth="1.300">
                            <path d="M1 4l2.500-2.500L6 4M1 8l2.500-2.500L6 8" />
                        </svg>
                        <ToolIcon $gap={9}><SpeakerIcon /></ToolIcon>
                        <ToolIcon $gap={8}><NetworkIcon /></ToolIcon>
                        <ToolIcon $gap={7}><FlagIcon /></ToolIcon>
                        <Clock><Fit text="11:29 AM" width={46} /></Clock>
                        <MonitorIcon />
                    </Tray>
                </Taskbar>
            </Desktop>
        </>
    );
}
